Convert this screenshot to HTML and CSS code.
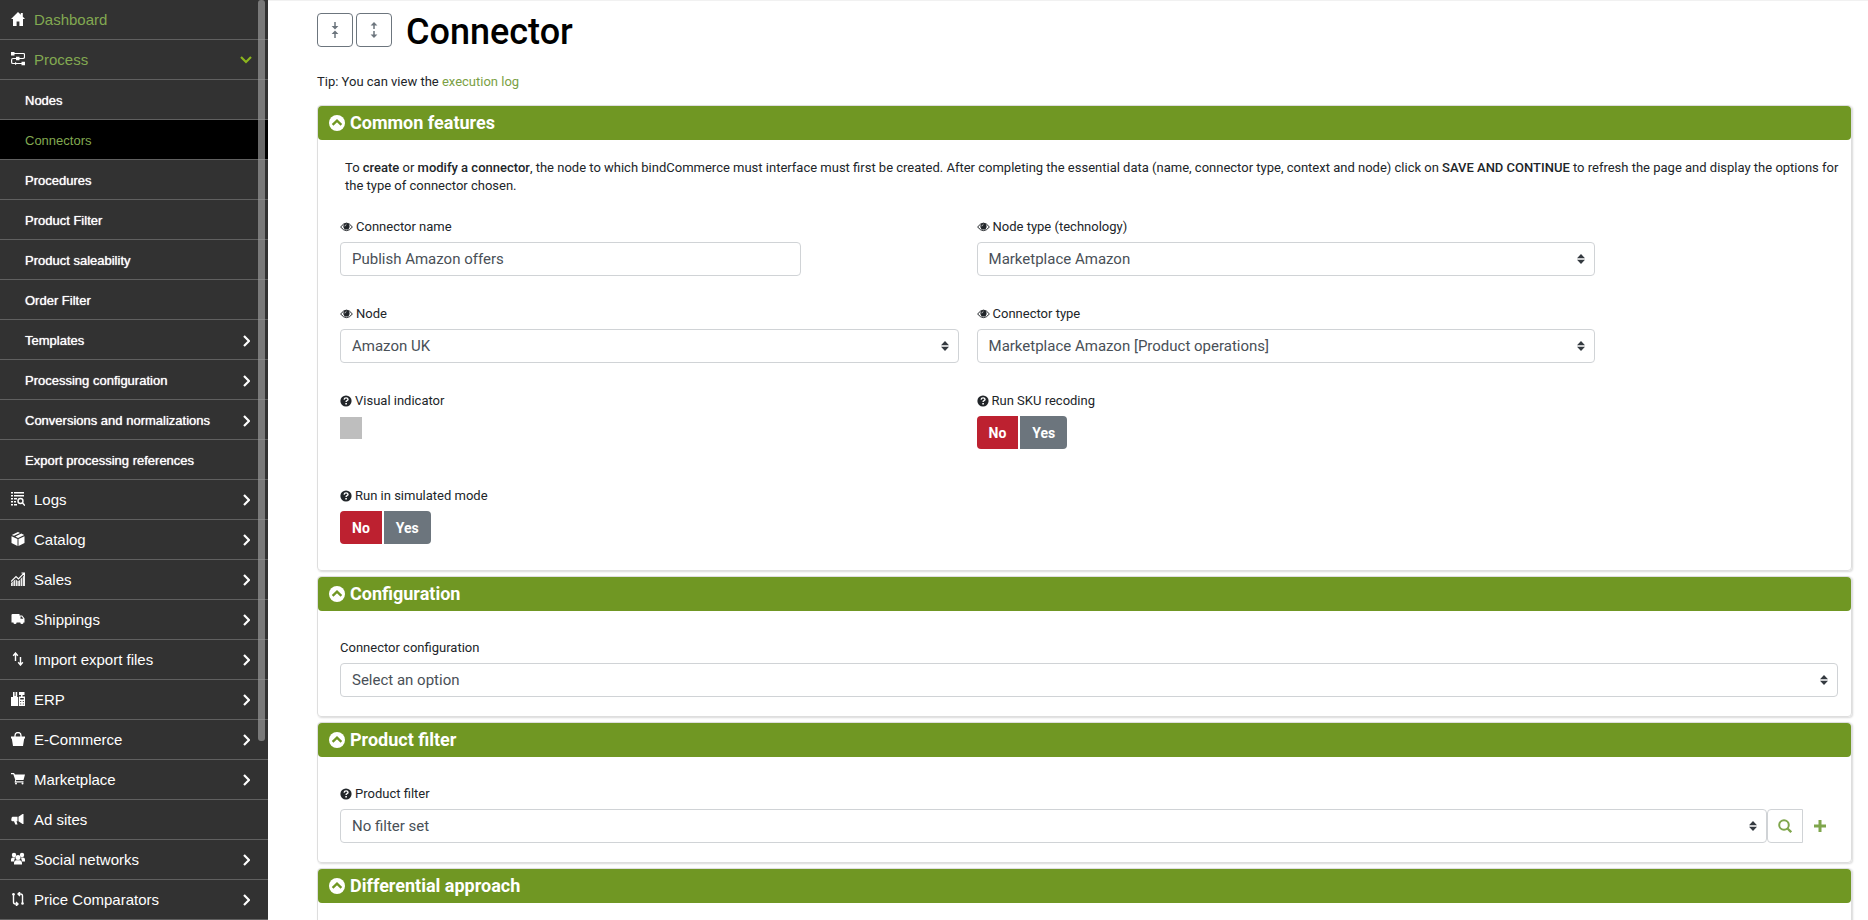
FILE: index.html
```html
<!DOCTYPE html>
<html lang="en">
<head>
<meta charset="utf-8">
<title>Connector</title>
<link rel="stylesheet" href="styles.css">
</head>
<body>
<svg class="sprite" aria-hidden="true">
  <symbol id="right" viewBox="0 0 7 12"><path d="M1 1l5 5-5 5" fill="none" stroke="currentColor" stroke-width="2.2"/></symbol>
  <symbol id="down" viewBox="0 0 12 8"><path d="M1 1l5 5 5-5" fill="none" stroke="currentColor" stroke-width="2.2"/></symbol>
  <symbol id="home" viewBox="0 0 14 14"><path d="M7 0L0 7h2v7h3.600V9.500h2.800V14H12V7h2l-2.200-2.300V1H9.800v1.700z"/></symbol>
  <symbol id="process" viewBox="0 0 14 14"><path d="M1.500 1.500h11q1 0 1 1V5q0 1.500-1.500 1.500H2Q.6 6.500.6 8v2.200q0 1.300 1.400 1.300h10" fill="none" stroke="currentColor" stroke-width="1.200"/><path d="M0 0h3.500v3.500H0zM5 4.800h3.500v3.500H5zM10.500 9.800H14v3.400h-3.500zM4 10l2.500 1.500L4 13z"/></symbol>
  <symbol id="logs" viewBox="0 0 14 14"><path d="M0 0h2v1.500H0zM3 0h10v1.500H3zM0 3h2v1.500H0zM3 3h10v1.500H3zM0 6h2v1.500H0zM3 6h3v1.500H3zM0 9h2v1.500H0zM3 9h2v1.500H3zM0 12h2v1.500H0zM3 12h3v1.500H3z"/><path d="M11.500 11L14 13.600" stroke="currentColor" stroke-width="1.500"/><circle cx="9.500" cy="9" r="2.500" fill="none" stroke="currentColor" stroke-width="1.400"/></symbol>
  <symbol id="box" viewBox="0 0 14 14"><path d="M7 0l2 .9-6 2.900L.8 3zM10.300 1.500L13.200 3 7 5.900 4.300 4.500zM.5 4.200L6.500 7v7L.5 11zM13.500 4.200L7.500 7v7l6-3z"/></symbol>
  <symbol id="sales" viewBox="0 0 14 14"><path d="M0 14v-3l1.800-1.500V14zM2.400 14V9l1.800-1.500V14zM4.800 14V7.500L6.600 9v5zM7.200 14V9L9 8v6zM9.600 14V7l1.800-2v9zM12 14V4.500l2-2.500v12z" opacity=".9"/><path d="M0 9.500l5-5L7.500 7 13 1.200M10.500 1H13.500v3" fill="none" stroke="currentColor" stroke-width="1.200"/></symbol>
  <symbol id="truck" viewBox="0 0 14 14"><path d="M1.500 2H8.500v1.500h2.700L13.500 6.500v4h-1a1.600 1.600 0 0 1-3.200 0H5.600a1.600 1.600 0 0 1-3.200 0H.5V3a1 1 0 0 1 1-1zM9.500 4.500v2.200h2.800L10.700 4.500z" fill-rule="evenodd"/></symbol>
  <symbol id="updown" viewBox="0 0 14 14"><path d="M4.500 9V2M2.200 3.800L4.500 1l2.300 2.800M9.500 5v7M7.200 10.200L9.500 13l2.300-2.800" fill="none" stroke="currentColor" stroke-width="1.400"/></symbol>
  <symbol id="erp" viewBox="0 0 14 14"><path d="M0 5h2V0h1.600v4h1V0h1.600v5h1v9H0zM8 0h5.500v3h-2v1.500H14V14H8V4.500h2V3H8zM9.200 6v1.500h3.600V6zM9.200 9v1h1V9zM11.800 9v1h1V9zM9.200 11.500v1h1v-1zM11.800 11.500v1h1v-1z" fill-rule="evenodd"/></symbol>
  <symbol id="bag" viewBox="0 0 14 14"><path d="M0 4.500h14v2h-.8L12 14H2L.8 6.500H0z"/><path d="M4 6V3.500a3 3 0 0 1 6 0V6" fill="none" stroke="currentColor" stroke-width="1.300"/></symbol>
  <symbol id="cart" viewBox="0 0 14 14"><path d="M0 1h3l1 1.500h10L12.500 8H5.300l-.5 1.200h7.700v1.200H3.500l.8-2.400L2.300 2.200H0z"/><circle cx="5" cy="11.600" r="1"/><circle cx="11.500" cy="11.600" r="1"/></symbol>
  <symbol id="horn" viewBox="0 0 14 14"><path d="M12.500 2v10h-1L7.500 9.300V4.800L11.500 2zM1.500 4.800h5v4.500H5.500l1 3.200H4.300L3 9.300H1.500A1.500 1.500 0 0 1 .5 7a2 2 0 0 1 1-2.200z"/></symbol>
  <symbol id="people" viewBox="0 0 14 14"><circle cx="3" cy="3" r="2.200"/><circle cx="11" cy="3" r="2.200"/><path d="M0 9.500V7.500Q0 5.500 2 5.500h2L3 9.500zM14 9.500V7.500q0-2-2-2h-2l1 4z"/><circle cx="7" cy="5.500" r="2.500"/><path d="M3 12.500Q2.700 8.500 5 8.200h4q2.300.3 2 4.300z"/></symbol>
  <symbol id="compare" viewBox="0 0 14 14"><path d="M2.500 3v7q0 2 2 2h2M5 10l2 2-2 2M11.500 11V4q0-2-2-2h-2M9 0L7 2l2 2" fill="none" stroke="currentColor" stroke-width="1.400"/><circle cx="2.500" cy="2.200" r="1.300"/><circle cx="11.500" cy="11.500" r="1.300"/></symbol>
  <symbol id="eye" viewBox="0 0 13 10"><path d="M.6 5Q6.500-2.800 12.400 5 6.500 12.300.6 5z" fill="none" stroke="currentColor" stroke-width="1"/><circle cx="6.500" cy="4.400" r="3.100"/><path d="M4.800 4.300Q5 2.900 6.400 2.700" fill="none" stroke="#fff" stroke-width=".7"/></symbol>
  <symbol id="help" viewBox="0 0 12 12"><circle cx="6" cy="6" r="5.600"/><path d="M4.100 4.600q.2-1.700 2-1.700t1.900 1.500q0 .8-1 1.300-.9.400-.9 1.200" fill="none" stroke="#fff" stroke-width="1.400"/><path d="M5.300 7.900h1.600v1.500H5.300z" fill="#fff"/></symbol>
  <symbol id="circleup" viewBox="0 0 16 16"><circle cx="8" cy="8" r="8"/><path d="M3.600 9.900L8 5.700l4.400 4.200" fill="none" stroke="#709723" stroke-width="2.300"/></symbol>
  <symbol id="sort" viewBox="0 0 8 10"><path d="M4 0L8 4.200H0zM4 10l4-4.200H0z"/></symbol>
</svg>
<div class="app">
  <nav class="sidebar">
    <a class="item active" href="#"><svg class="ico"><use href="#home"/></svg>Dashboard</a>
    <a class="item active" href="#"><svg class="ico"><use href="#process"/></svg>Process<svg class="open"><use href="#down"/></svg></a>
    <a class="item sub" href="#">Nodes</a>
    <a class="item sub current" href="#">Connectors</a>
    <a class="item sub" href="#">Procedures</a>
    <a class="item sub" href="#">Product Filter</a>
    <a class="item sub" href="#">Product saleability</a>
    <a class="item sub" href="#">Order Filter</a>
    <a class="item sub" href="#">Templates<svg class="more"><use href="#right"/></svg></a>
    <a class="item sub" href="#">Processing configuration<svg class="more"><use href="#right"/></svg></a>
    <a class="item sub" href="#">Conversions and normalizations<svg class="more"><use href="#right"/></svg></a>
    <a class="item sub" href="#">Export processing references</a>
    <a class="item" href="#"><svg class="ico"><use href="#logs"/></svg>Logs<svg class="more"><use href="#right"/></svg></a>
    <a class="item" href="#"><svg class="ico"><use href="#box"/></svg>Catalog<svg class="more"><use href="#right"/></svg></a>
    <a class="item" href="#"><svg class="ico"><use href="#sales"/></svg>Sales<svg class="more"><use href="#right"/></svg></a>
    <a class="item" href="#"><svg class="ico"><use href="#truck"/></svg>Shippings<svg class="more"><use href="#right"/></svg></a>
    <a class="item" href="#"><svg class="ico"><use href="#updown"/></svg>Import export files<svg class="more"><use href="#right"/></svg></a>
    <a class="item" href="#"><svg class="ico"><use href="#erp"/></svg>ERP<svg class="more"><use href="#right"/></svg></a>
    <a class="item" href="#"><svg class="ico"><use href="#bag"/></svg>E-Commerce<svg class="more"><use href="#right"/></svg></a>
    <a class="item" href="#"><svg class="ico"><use href="#cart"/></svg>Marketplace<svg class="more"><use href="#right"/></svg></a>
    <a class="item" href="#"><svg class="ico"><use href="#horn"/></svg>Ad sites</a>
    <a class="item" href="#"><svg class="ico"><use href="#people"/></svg>Social networks<svg class="more"><use href="#right"/></svg></a>
    <a class="item" href="#"><svg class="ico"><use href="#compare"/></svg>Price Comparators<svg class="more"><use href="#right"/></svg></a>
    <div class="scrollbar"></div>
  </nav>

  <main class="main">
    <header class="title-row">
      <button class="fold" type="button" aria-label="Collapse all"><svg class="fold-ico" viewBox="0 0 8 16"><path d="M4 0v5M4 11v5" stroke="currentColor" stroke-width="1.500"/><path d="M.6 4h6.800L4 7.500zM.6 12h6.800L4 8.500z"/></svg></button>
      <button class="fold" type="button" aria-label="Expand all"><svg class="fold-ico" viewBox="0 0 8 16"><path d="M4 3v4M4 9v4" stroke="currentColor" stroke-width="1.500"/><path d="M.6 3.500h6.800L4 0zM.6 12.500h6.800L4 16z"/></svg></button>
      <h1 class="title">Connector</h1>
    </header>
    <p class="tip">Tip: You can view the <a class="link" href="#">execution log</a></p>

    <section class="card">
      <h2 class="card-head"><svg class="head-ico"><use href="#circleup"/></svg>Common features</h2>
      <div class="card-body features">
        <p class="intro">To <strong>create</strong> or <strong>modify a connector</strong>, the node to which bindCommerce must interface must first be created. After completing the essential data (name, connector type, context and node) click on <strong>SAVE AND CONTINUE</strong> to refresh the page and display the options for the type of connector chosen.</p>
        <div class="grid">
          <div class="field">
            <label class="label" for="name"><svg class="eye"><use href="#eye"/></svg>Connector name</label>
            <input class="control short" id="name" type="text" value="Publish Amazon offers">
          </div>
          <div class="field second">
            <label class="label" for="tech"><svg class="eye"><use href="#eye"/></svg>Node type (technology)</label>
            <div class="select"><select class="control" id="tech"><option>Marketplace Amazon</option></select><svg class="sort"><use href="#sort"/></svg></div>
          </div>
          <div class="field">
            <label class="label" for="node"><svg class="eye"><use href="#eye"/></svg>Node</label>
            <div class="select"><select class="control" id="node"><option>Amazon UK</option></select><svg class="sort"><use href="#sort"/></svg></div>
          </div>
          <div class="field second">
            <label class="label" for="type"><svg class="eye"><use href="#eye"/></svg>Connector type</label>
            <div class="select"><select class="control" id="type"><option>Marketplace Amazon [Product operations]</option></select><svg class="sort"><use href="#sort"/></svg></div>
          </div>
          <div class="field">
            <label class="label" for="swatch"><svg class="help"><use href="#help"/></svg>Visual indicator</label>
            <button class="swatch" id="swatch" type="button"></button>
          </div>
          <div class="field second tall">
            <span class="label" id="sku"><svg class="help"><use href="#help"/></svg>Run SKU recoding</span>
            <div class="toggle" role="group" aria-labelledby="sku"><button class="no" type="button">No</button><button class="yes" type="button">Yes</button></div>
          </div>
          <div class="field">
            <span class="label" id="sim"><svg class="help"><use href="#help"/></svg>Run in simulated mode</span>
            <div class="toggle" role="group" aria-labelledby="sim"><button class="no" type="button">No</button><button class="yes" type="button">Yes</button></div>
          </div>
        </div>
      </div>
    </section>

    <section class="card">
      <h2 class="card-head"><svg class="head-ico"><use href="#circleup"/></svg>Configuration</h2>
      <div class="card-body">
        <label class="label" for="config">Connector configuration</label>
        <div class="select"><select class="control" id="config"><option>Select an option</option></select><svg class="sort"><use href="#sort"/></svg></div>
      </div>
    </section>

    <section class="card">
      <h2 class="card-head"><svg class="head-ico"><use href="#circleup"/></svg>Product filter</h2>
      <div class="card-body">
        <label class="label" for="filter"><svg class="help"><use href="#help"/></svg>Product filter</label>
        <div class="filter-row">
          <div class="select"><select class="control" id="filter"><option>No filter set</option></select><svg class="sort"><use href="#sort"/></svg></div>
          <button class="search" type="button" aria-label="Search"><svg class="search-ico" viewBox="0 0 14 14"><circle cx="6" cy="6" r="4.800" fill="none" stroke="currentColor" stroke-width="2"/><path d="M9.500 9.500l3.700 3.700" stroke="currentColor" stroke-width="2.300"/></svg></button>
          <button class="add" type="button" aria-label="Add filter"><svg class="add-ico" viewBox="0 0 12 12"><path d="M6 0v12M0 6h12" stroke="currentColor" stroke-width="3"/></svg></button>
        </div>
      </div>
    </section>

    <section class="card">
      <h2 class="card-head"><svg class="head-ico"><use href="#circleup"/></svg>Differential approach</h2>
      <div class="card-body"></div>
    </section>
  </main>
</div>
</body>
</html>
```
FILE: styles.css
```css
* { box-sizing: border-box; }
body {
  margin: 0;
  background: #fff;
  color: #212529;
  font: 13px/18px Roboto, "Liberation Sans", sans-serif;
}
svg { fill: currentColor; flex: none; }
.sprite { position: absolute; width: 0; height: 0; }
h1, h2, p { margin: 0; }
button, input, select { font: inherit; margin: 0; }
.app { display: flex; height: 100vh; overflow: hidden; }

/* Sidebar */
.sidebar {
  position: relative;
  flex: none;
  width: 268px;
  overflow: hidden;
  background: #323232;
  font-family: "Liberation Sans", Arial, sans-serif;
}
.item {
  display: flex;
  align-items: center;
  height: 40px;
  padding: 0 18px 0 11px;
  border-bottom: 1px solid #606060;
  color: #fff;
  font-size: 15px;
  text-decoration: none;
}
.item.active { color: #82a951; }
.sub { padding-top: 2px; padding-left: 25px; font-size: 13px; text-shadow: 0 0 1px #fff; }
.sub.current { background: #000; color: #82a951; text-shadow: none; }
.ico { width: 14px; height: 14px; margin: 0 9px 2px 0; color: #fff; }
.more { width: 7px; height: 12px; margin-left: auto; }
.open { width: 12px; height: 8px; margin: 0 -2px 0 auto; color: #8cb51e; }
.scrollbar {
  position: absolute;
  top: 0;
  right: 3px;
  width: 7px;
  height: 741px;
  border-radius: 3px;
  background: rgba(160, 160, 160, .65);
}

/* Page */
.main {
  flex: 1;
  min-width: 0;
  overflow: hidden;
  padding: 12px 16px 0 49px;
  border-top: 1px solid #f1f1f1;
}
.title-row { display: flex; align-items: center; gap: 3px; height: 34px; }
.fold {
  display: flex;
  align-items: center;
  justify-content: center;
  width: 36px;
  height: 34px;
  padding: 0;
  border: 1px solid #6c757d;
  border-radius: 4px;
  background: #fff;
  color: #6c757d;
}
.fold-ico { width: 8px; height: 16px; }
.title { margin-left: 11px; padding-top: 3px; color: #000; font-size: 36px; line-height: 34px; font-weight: 500; }
.tip { margin: 26px 0 14px; }
.link { color: #7a9f45; text-decoration: none; }

.card {
  margin-bottom: 5px;
  border: 1px solid #dedede;
  border-radius: 4px;
  box-shadow: 1px 1px 2px rgba(0, 0, 0, .15);
}
.card-head {
  display: flex;
  align-items: center;
  gap: 5px;
  height: 34px;
  padding: 0 11px;
  border-radius: 4px;
  background: #709723;
  color: #fff;
  font-size: 18px;
  font-weight: 700;
}
.head-ico { width: 16px; height: 16px; }
.card-body { padding: 28px 13px 19px 22px; }
.features { padding-top: 19px; padding-bottom: 26px; }
.intro { margin-right: -4px; padding: 0 0 23px 5px; }
strong { font-weight: 500; }
.grid { display: grid; grid-template-columns: 11fr 11fr 4fr; gap: 29px 18px; }
.field { grid-column: 1; min-width: 0; }
.second { grid-column: 2; }
.tall { padding-bottom: 9px; }
.label { display: flex; align-items: center; margin-bottom: 6px; }
.eye { width: 13px; height: 10px; margin-right: 3px; }
.help { width: 12px; height: 12px; margin-right: 3px; }
.control {
  display: block;
  width: 100%;
  height: 34px;
  padding: 0 11px;
  border: 1px solid #d0d3d6;
  border-radius: 4px;
  background: #fff;
  color: #495057;
  font-size: 15px;
  appearance: none;
}
.short { width: 461px; }
.select { position: relative; flex: 1; min-width: 0; }
.sort {
  position: absolute;
  top: 12px;
  right: 10px;
  width: 8px;
  height: 10px;
  color: #343a40;
  pointer-events: none;
}
.swatch { display: block; width: 22px; height: 22px; margin-top: 7px; padding: 0; border: 0; background: #bebebe; }
.toggle { display: flex; gap: 2px; }
.no, .yes {
  height: 33px;
  padding: 0 12px;
  border: 0;
  color: #fff;
  font-size: 14px;
  font-weight: 700;
}
.no { border-radius: 4px 0 0 4px; background: #bd2130; }
.yes { border-radius: 0 4px 4px 0; background: #6c757d; }
.filter-row { display: flex; }
.search {
  display: flex;
  align-items: center;
  justify-content: center;
  width: 36px;
  padding: 0;
  border: 1px solid #d0d3d6;
  border-radius: 4px 0 0 4px;
  background: #fff;
  color: #7fa64c;
}
.search-ico { width: 14px; height: 14px; }
.add {
  display: flex;
  align-items: center;
  width: 35px;
  padding: 0 11px;
  border: 0;
  background: none;
  color: #7fa64c;
}
.add-ico { width: 12px; height: 12px; }
```
